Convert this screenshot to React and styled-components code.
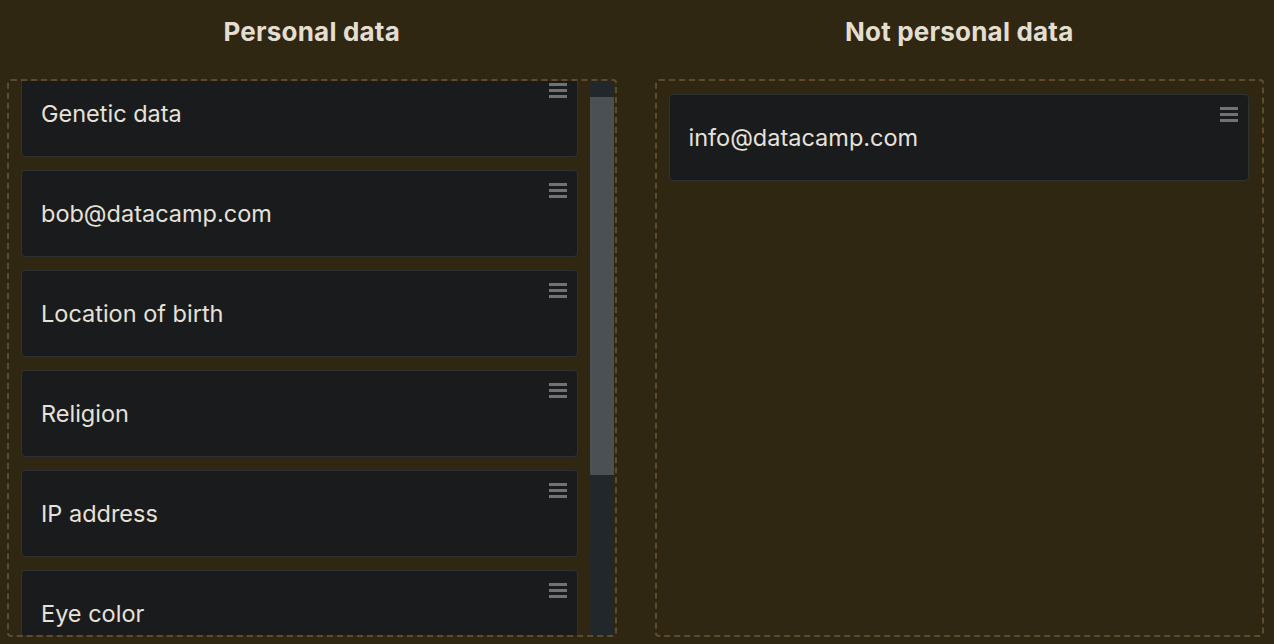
import React, { useEffect, useRef, useState } from 'react';
import styled, { createGlobalStyle } from 'styled-components';

const GlobalStyle = createGlobalStyle`
  html, body {
    margin: 0;
    padding: 0;
    background: #302713;
    font-family: Inter, "Noto Sans", sans-serif;
  }
`;

const Board = styled.div`
  display: grid;
  grid-template-columns: 1fr 1fr;
  grid-template-rows: minmax(0, 1fr);
  column-gap: 38px;
  padding: 0 10px 0 7px;
  height: 644px;
  box-sizing: border-box;
  overflow: hidden;
`;

const Column = styled.section`
  display: flex;
  flex-direction: column;
  min-width: 0;
  min-height: 0;
`;

const Heading = styled.h2`
  margin: 0;
  flex: 0 0 79px;
  padding-top: 16px;
  box-sizing: border-box;
  text-align: center;
  font-size: 26px;
  font-weight: 700;
  letter-spacing: 0.2px;
  color: #e4ded1;
`;

const DropZone = styled.div`
  flex: 1;
  margin-bottom: 7px;
  border: 2px dashed #5b4c2f;
  border-radius: 4px;
  display: flex;
  min-height: 0;
`;

const List = styled.div`
  flex: 1;
  min-height: 0;
  overflow: hidden;
  padding: 13px ${(p) => (p.$scroll ? '12px' : '13px')} 13px 12px;
  display: flex;
  flex-direction: column;
  gap: 13px;
`;

const Track = styled.div`
  position: relative;
  flex: 0 0 24px;
  margin-right: 1px;
  background: #22272b;
`;

const Thumb = styled.div`
  position: absolute;
  left: 0;
  right: 0;
  background: #4b5054;
`;

const Card = styled.div`
  position: relative;
  flex: 0 0 auto;
  height: 87px;
  box-sizing: border-box;
  background: #1a1b1d;
  border: 1px solid #303134;
  border-radius: 4px;
  display: flex;
  align-items: center;
  padding: 0 19px;
  font-size: 23.5px;
  color: #e6e2d9;
`;

const Grip = styled.span`
  position: absolute;
  top: 12px;
  right: 10px;
  width: 18px;
  display: flex;
  flex-direction: column;
  gap: 3px;

  & > i {
    display: block;
    height: 3px;
    background: #727272;
  }
`;

const personal = [
  'Genetic data',
  'bob@datacamp.com',
  'Location of birth',
  'Religion',
  'IP address',
  'Eye color',
  'Home address',
  'Political opinion',
];

const notPersonal = ['info@datacamp.com'];

const Item = ({ label }) => (
  <Card>
    {label}
    <Grip>
      <i />
      <i />
      <i />
    </Grip>
  </Card>
);

export default function App() {
  const listRef = useRef(null);
  const [thumb, setThumb] = useState({ top: 14, height: 379 });

  useEffect(() => {
    const el = listRef.current;
    if (!el) return;
    el.scrollTop = 24;
    const h = el.clientHeight;
    setThumb({
      top: (el.scrollTop / el.scrollHeight) * h,
      height: (h / el.scrollHeight) * h,
    });
  }, []);

  return (
    <>
      <GlobalStyle />
      <Board>
        <Column>
          <Heading>Personal data</Heading>
          <DropZone>
            <List ref={listRef} $scroll>
              {personal.map((p) => (
                <Item key={p} label={p} />
              ))}
            </List>
            <Track>
              <Thumb style={{ top: thumb.top, height: thumb.height }} />
            </Track>
          </DropZone>
        </Column>
        <Column>
          <Heading>Not personal data</Heading>
          <DropZone>
            <List>
              {notPersonal.map((p) => (
                <Item key={p} label={p} />
              ))}
            </List>
          </DropZone>
        </Column>
      </Board>
    </>
  );
}
